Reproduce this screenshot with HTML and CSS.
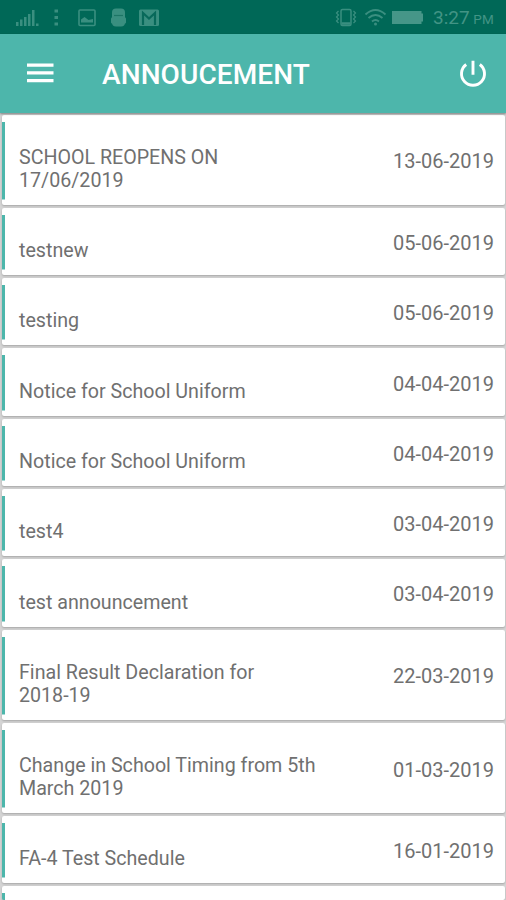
FILE: index.html
```html
<!DOCTYPE html>
<html lang="en">
<head>
  <meta charset="UTF-8" />
  <meta name="viewport" content="width=device-width, initial-scale=1" />
  <title>Annoucement</title>
  <link rel="stylesheet" href="styles.css">
</head>
<body>
  <div class="statusBar">
    <svg class="statusIcons" width="160" height="34" viewBox="0 0 160 34" fill="#3a8f80">
      <!-- Signal -->
      <path d="M16 22h2.500v4H16zM20 19.500h2.500V26H20zM24 17h2.500v9H24zM28 14h2.500v12H28zM32 10h2.500v16H32zM36 23.500h2.500V26H36z" />
      <!-- More -->
      <path d="M54.500 9.500h3.500v3h-3.500zM54.500 16h3.500v3h-3.500zM54.500 22.500h3.500v3h-3.500z" />
      <!-- Picture -->
      <rect x="79" y="10" width="16" height="15.500" rx="1" fill="none" stroke="#3a8f80" stroke-width="1.600" />
      <path d="M81 22.500v-3l3.500-2.500 4 3 4.500-1v3.500z" />
      <!-- Android -->
      <rect x="112" y="8.500" width="13" height="18" rx="4" />
      <rect x="111" y="17.500" width="15" height="6" rx="1" />
      <path d="M114 15.500h9" stroke="#1d7565" stroke-width="1.200" />
      <!-- Mail -->
      <rect x="139" y="9.500" width="20" height="16.500" rx="1.500" />
      <path d="M143 25V13l6 5.500 6-5.500v12" fill="none" stroke="#08695a" stroke-width="2.200" />
    </svg>
    <div class="statusRight">
      <svg width="90" height="34" viewBox="0 0 90 34" fill="none" stroke="#3a8f80" stroke-width="1.500">
        <!-- Vibrate -->
        <rect x="6" y="9.500" width="10" height="16" rx="1.500" />
        <path d="M6.500 23.500h9" stroke-width="2.500" />
        <path d="M3.500 11l-2 2 2 2-2 2 2 2-2 2 2 2M18.500 11l2 2-2 2 2 2-2 2 2 2-2 2" stroke-width="1.200" />
        <!-- Wifi -->
        <path d="M30.500 14.500q10-9 20 0M33.500 18q7-6 14 0M37 21.500q3.500-3 7 0" stroke-width="1.900" />
        <circle cx="40.500" cy="24" r="1.500" fill="#3a8f80" stroke="none" />
        <!-- Battery -->
        <path d="M57 11h29.500v2.500H88v8h-1.500V24H57z" fill="#469688" stroke="none" />
      </svg>
      <span class="time">3:27 <small>PM</small></span>
    </div>
  </div>

  <header class="toolbar">
    <svg class="menuIcon" width="27" height="20" viewBox="0 0 27 20" fill="#fff">
      <path d="M0 .5h26.500v3.200H0zM0 8.200h26.500v3.200H0zM0 16h26.500v3.200H0z" />
    </svg>
    <h1>ANNOUCEMENT</h1>
    <svg class="powerIcon" width="28" height="28" viewBox="0 0 28 28" fill="none" stroke="#fff" stroke-width="2.900">
      <path d="M14 .7v14M7.200 4.500a11.500 11.500 0 1 0 13.600 0" />
    </svg>
  </header>

  <main class="list">
    <div class="card">
      <p class="title">SCHOOL REOPENS ON<br>17/06/2019</p>
      <span class="date">13-06-2019</span>
    </div>
    <div class="card">
      <p class="title">testnew</p>
      <span class="date">05-06-2019</span>
    </div>
    <div class="card">
      <p class="title">testing</p>
      <span class="date">05-06-2019</span>
    </div>
    <div class="card">
      <p class="title">Notice for School Uniform</p>
      <span class="date">04-04-2019</span>
    </div>
    <div class="card">
      <p class="title">Notice for School Uniform</p>
      <span class="date">04-04-2019</span>
    </div>
    <div class="card">
      <p class="title">test4</p>
      <span class="date">03-04-2019</span>
    </div>
    <div class="card">
      <p class="title">test announcement</p>
      <span class="date">03-04-2019</span>
    </div>
    <div class="card">
      <p class="title">Final Result Declaration for<br>2018-19</p>
      <span class="date">22-03-2019</span>
    </div>
    <div class="card">
      <p class="title">Change in School Timing from 5th<br>March 2019</p>
      <span class="date">01-03-2019</span>
    </div>
    <div class="card">
      <p class="title">FA-4 Test Schedule</p>
      <span class="date">16-01-2019</span>
    </div>
    <div class="card next"></div>
  </main>
</body>
</html>
```

FILE: styles.css
```css
/* Basic Reset */
* {
  box-sizing: border-box;
  margin: 0;
  padding: 0;
}
body {
  display: flex;
  flex-direction: column;
  font-family: Roboto, sans-serif;
  background-color: #d4d4d4;
  height: 100vh;
  overflow: hidden;
}
svg {
  display: block;
  flex-shrink: 0;
}

/* Status bar */
.statusBar {
  display: flex;
  flex-shrink: 0;
  justify-content: space-between;
  height: 34px;
  background-color: #006857;
}
.statusRight {
  display: flex;
  align-items: center;
  padding-right: 10px;
}
.time {
  width: 63px;
  margin-left: 8px;
  padding-top: 2px;
  font-size: 19px;
  line-height: 24px;
  white-space: nowrap;
  color: #429485;
}
.time small {
  margin-left: -1px;
  font-size: 13.5px;
}

/* Toolbar */
.toolbar {
  display: flex;
  flex-shrink: 0;
  align-items: center;
  height: 79px;
  padding: 0 19px 0 27px;
  background-color: #4db6ab;
  box-shadow: 0 1px 2px rgba(0, 0, 0, 0.4);
  position: relative;
}
.menuIcon {
  margin-top: -1px;
}
.toolbar h1 {
  margin-left: 48px;
  padding-top: 2px;
  font-size: 28px;
  font-weight: 500;
  line-height: 32px;
  letter-spacing: 0.1px;
  color: #fff;
}
.powerIcon {
  margin-left: auto;
}

/* Announcements */
.list {
  display: flex;
  flex: 1;
  flex-direction: column;
  gap: 3px;
  min-height: 0;
  padding: 1.5px 1px 0 2px;
  overflow: hidden;
}
.card {
  display: flex;
  flex-shrink: 0;
  align-items: center;
  justify-content: space-between;
  min-height: 67.3px;
  padding-right: 11px;
  background: linear-gradient(#4db6ab, #4db6ab) 0 7px / 3px calc(100% - 12.5px) no-repeat #fff;
  border-radius: 2px;
  box-shadow: 0 1px 2px rgba(0, 0, 0, 0.22);
}
/* Only the top of the next card is in view */
.next {
  flex: 1;
  min-height: 0;
  background-size: 3px 100%;
}
.title {
  align-self: flex-start;
  padding: 31.3px 0 13px 17px;
  font-size: 19.65px;
  line-height: 23px;
  color: #707070;
}
.date {
  font-size: 20px;
  line-height: 23px;
  padding-top: 4px;
  color: #707070;
}
```
